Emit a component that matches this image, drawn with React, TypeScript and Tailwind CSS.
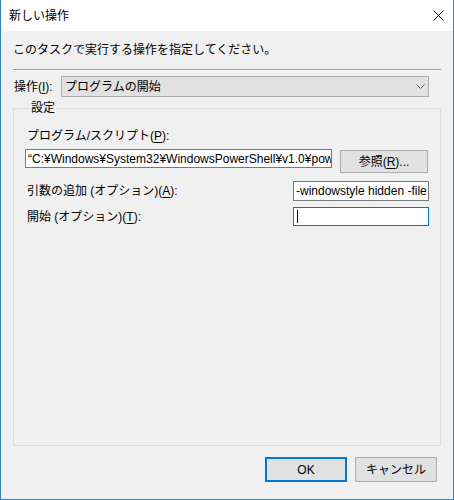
import React from 'react';

const Key = ({ k }: { k: string }) => <u className="underline-offset-2">{k}</u>;

const TextBox = ({ value, width, height, focused }: { value?: string; width: string; height: string; focused?: boolean }) => (
  <div
    className={`${width} ${height} bg-white border flex items-center overflow-hidden whitespace-nowrap pl-[2px] ${
      focused ? 'border-[#0078d7]' : 'border-[#7a7a7a]'
    }`}
  >
    {value ? <span>{value}</span> : null}
    {focused ? <span className="w-px h-[13px] bg-black ml-px" /> : null}
  </div>
);

export default function App() {
  return (
    <div className="w-[454px] h-[500px] bg-[#f0f0f0] border-x border-b border-[#2b88d8] flex flex-col text-[12px] leading-[16px] text-black font-['Liberation_Sans','Noto_Sans_CJK_JP',sans-serif]">
      {/* タイトルバー */}
      <div className="h-[31px] bg-white flex items-center justify-between pl-[8px] pr-[9px]">
        <span>新しい操作</span>
        <svg width="11" height="11" viewBox="0 0 11 11" className="text-black">
          <path d="M0.5 0.5 L10.5 10.5 M10.5 0.5 L0.5 10.5" stroke="currentColor" strokeWidth="1" />
        </svg>
      </div>

      <div className="flex-1 flex flex-col px-[12px]">
        <div className="mt-[11px]">このタスクで実行する操作を指定してください。</div>

        {/* 区切り線 */}
        <div className="mt-[11px] w-[428px] border-t border-t-[#a0a0a0] border-b border-b-white" />

        {/* 操作 */}
        <div className="mt-[5px] flex items-center">
          <span className="w-[48px] pl-px">
            操作(<Key k="I" />):
          </span>
          <div className="w-[368px] h-[21px] bg-[#e1e1e1] border border-[#adadad] flex items-center justify-between pl-[3px] pr-[3px]">
            <span>プログラムの開始</span>
            <svg width="9" height="5" viewBox="0 0 9 5">
              <path d="M0.5 0.5 L4.5 4.5 L8.5 0.5" fill="none" stroke="#606060" strokeWidth="1" />
            </svg>
          </div>
        </div>

        {/* 設定 */}
        <fieldset className="mt-[3px] w-[428px] h-[346px] border border-[#dcdcdc] pl-[11px] pr-[11px]">
          <legend className="ml-[5px] px-px">設定</legend>

          <div className="mt-[12px] pl-[2px]">
            プログラム/スクリプト(<Key k="P" />):
          </div>
          <div className="mt-[5px] flex items-start gap-[8px]">
            <TextBox
              width="w-[307px]"
              height="h-[19px]"
              value={'“C:¥Windows¥System32¥WindowsPowerShell¥v1.0¥powershell.exe”'}
            />
            <button className="mt-px w-[88px] h-[23px] bg-[#e1e1e1] border border-[#adadad] flex items-center justify-center">
              <span>
                参照(<Key k="R" />)...
              </span>
            </button>
          </div>

          <div className="mt-[8px] flex items-center justify-between">
            <span className="pl-[2px]">
              引数の追加 (オプション)(<Key k="A" />):
            </span>
            <TextBox width="w-[136px]" height="h-[20px]" value="-windowstyle hidden -file C:\scripts\run.ps1" />
          </div>

          <div className="mt-[6px] flex items-center justify-between">
            <span className="pl-[2px]">
              開始 (オプション)(<Key k="T" />):
            </span>
            <TextBox width="w-[136px]" height="h-[19px]" focused />
          </div>
        </fieldset>

        {/* ボタン */}
        <div className="mt-[11px] flex justify-end gap-[8px] pr-[4px]">
          <button className="w-[82px] h-[25px] bg-[#e1e1e1] border-2 border-[#0078d7] flex items-center justify-center">
            OK
          </button>
          <button className="w-[82px] h-[25px] bg-[#e1e1e1] border border-[#adadad] flex items-center justify-center">
            キャンセル
          </button>
        </div>
      </div>
    </div>
  );
}
